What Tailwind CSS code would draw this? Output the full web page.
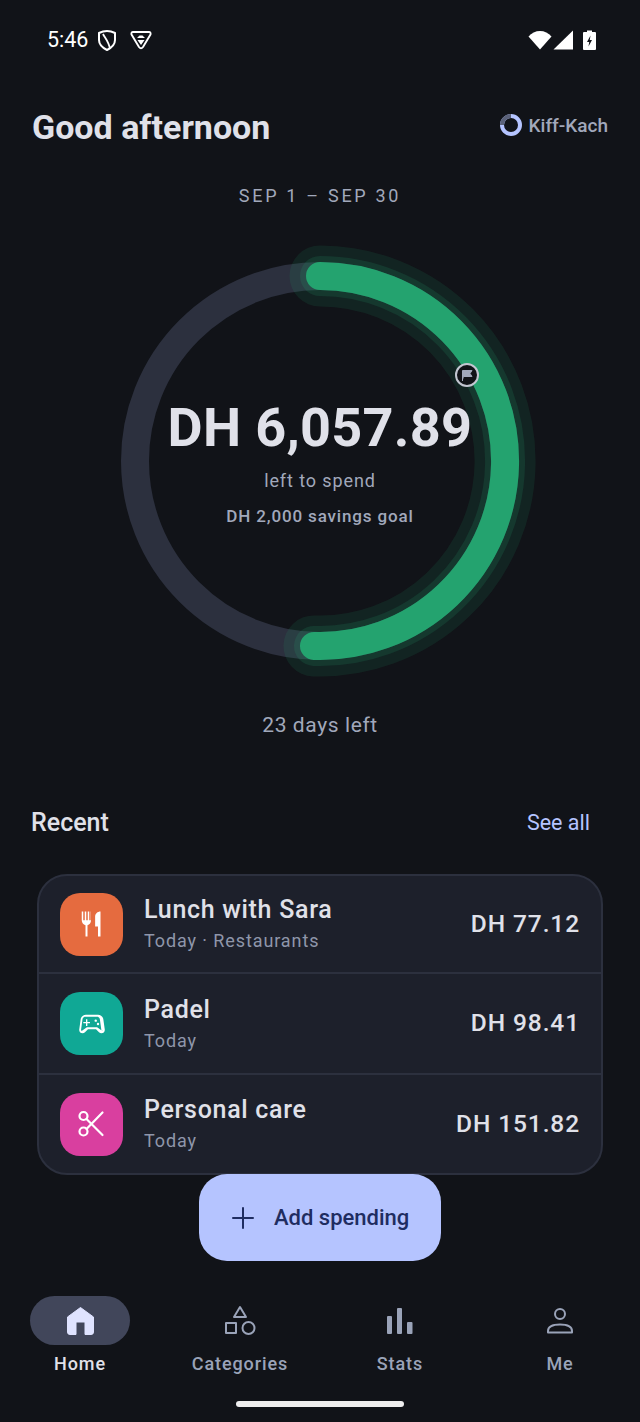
<!DOCTYPE html>
<html><head><meta charset="utf-8"><script src="https://cdn.jsdelivr.net/npm/@tailwindcss/browser@4"></script></head>
<body class="bg-[#111318]">
<div class="w-[640px] h-[1422px] overflow-hidden bg-[#111318] font-['Roboto',sans-serif] flex flex-col">
  <!-- status bar -->
  <div class="h-[80px] shrink-0 flex items-center pl-[47px] pr-[44px] text-white">
    <span class="text-[21.5px] leading-none w-[43px]">5:46</span>
    <svg class="ml-[7px]" width="20" height="22" viewBox="0 0 20 22" fill="none" stroke="#fff" stroke-width="2" stroke-linejoin="round"><path d="M10 2 C7 2 4 3 2 4 L2 11 C2 16 6 19 10 21 C14 19 18 16 18 11 L18 4 C16 3 13 2 10 2Z"/><path d="M6 5 C8 9 12 13 13 20" stroke-width="1.8"/></svg>
    <svg class="ml-[13px]" width="22" height="20" viewBox="0 0 22 20" fill="none"><path d="M3 2 H19 Q21 2 20.5 4.5 L13 17 Q11 19.5 9 17 L1.5 4.5 Q1 2 3 2Z" stroke="#fff" stroke-width="1.9" stroke-linejoin="round"/><path d="M7 8 L9.5 5.5 H12.5 L15 8Z M7.5 10 H14.5 L11 15Z" fill="#fff"/></svg>
    <div class="flex-1"></div>
    <svg width="24" height="20" viewBox="0 0 24 20"><path d="M0.5 6.5 C3.5 3 7.5 1 12 1 C16.5 1 20.5 3 23.5 6.5 L12 19.5Z" fill="#fff"/></svg>
    <svg class="ml-[1px] mr-[1px]" width="20" height="20" viewBox="0 0 20 20"><path d="M20 0.5 V19.5 H0.5Z" fill="#fff"/></svg>
    <svg class="ml-[9px]" width="13" height="20" viewBox="0 0 13 20"><path d="M4 0.5 H9 V2 H12 Q13 2 13 3 V19 Q13 20 12 20 H1 Q0 20 0 19 V3 Q0 2 1 2 H4Z" fill="#fff"/><path d="M7.5 5.5 L4 12 H6.2 L5.5 16.5 L9 10 H6.8Z" fill="#111318"/></svg>
  </div>
  <!-- header -->
  <div class="h-[92px] shrink-0 flex items-center justify-between pl-[32px] pr-[32px]">
    <h1 class="text-[34px] leading-none font-bold text-[#e0e1e9] mt-[2px]">Good afternoon</h1>
    <div class="flex items-center gap-[6px] -mt-[2px]">
      <svg width="24" height="24" viewBox="0 0 24 24" fill="none"><circle cx="12" cy="12" r="9" stroke="#b5c4ff" stroke-width="4"/><path d="M3 12 A9 9 0 0 1 12 3" stroke="#5a6178" stroke-width="4"/></svg>
      <span class="text-[19px] leading-none font-medium text-[#a1a8bb]">Kiff-Kach</span>
    </div>
  </div>
  <div class="text-center text-[18px] leading-[24px] tracking-[2.7px] text-[#a1a8bb] mt-[12px]">SEP 1 – SEP 30</div>
  <!-- ring -->
  <div class="relative w-[440px] h-[440px] mx-auto shrink-0 mt-[33px]">
    <svg class="absolute inset-0" width="440" height="440" viewBox="0 0 440 440" fill="none">
      <circle cx="220" cy="220" r="185" stroke="#2c303e" stroke-width="28"/>
      <path d="M220 35 A185 185 0 1 1 214 404.9" stroke="#24a36f" stroke-opacity=".12" stroke-width="61" stroke-linecap="round"/>
      <path d="M220 35 A185 185 0 1 1 214 404.9" stroke="#24a36f" stroke-opacity=".16" stroke-width="40" stroke-linecap="round"/>
      <path d="M220 35 A185 185 0 1 1 214 404.9" stroke="#24a36f" stroke-width="28" stroke-linecap="round"/>
      <circle cx="367" cy="134" r="11" fill="#111318" stroke="#c3c6d1" stroke-width="2"/>
      <path d="M362.5 140 V129.5 H372 L370 132.5 L372 135.5 H364" fill="#a1a8bb" stroke="#a1a8bb" stroke-width="1" stroke-linejoin="round"/>
    </svg>
    <div class="absolute inset-0 flex flex-col items-center">
      <div class="mt-[156px] text-[54px] leading-[62px] font-bold tracking-[.3px] text-[#e0e1e9]">DH 6,057.89</div>
      <div class="mt-[10px] text-[18px] leading-[24px] tracking-[.9px] text-[#a1a8bb]">left to spend</div>
      <div class="mt-[12px] text-[17px] leading-[22px] font-medium tracking-[.85px] text-[#a1a8bb]">DH 2,000 savings goal</div>
    </div>
  </div>
  <div class="text-center text-[21px] leading-[28px] tracking-[.6px] text-[#a1a8bb] mt-[30px]">23 days left</div>
  <!-- recent -->
  <div class="flex items-center justify-between pl-[31px] pr-[50px] mt-[67px] h-[34px]">
    <span class="text-[25px] font-medium text-[#e0e1e9]">Recent</span>
    <span class="text-[21.5px] font-normal text-[#b5c4ff]">See all</span>
  </div>
  <div class="mx-[37px] mt-[34px] rounded-[30px] border-2 border-[#2c303e] bg-[#1d202b] overflow-hidden shrink-0">
    <div class="h-[98px] flex items-center px-[21px] border-b-2 border-[#2c303e]">
      <div class="w-[63px] h-[63px] rounded-[20px] bg-[#e56b3f] flex items-center justify-center shrink-0">
        <svg width="30" height="30" viewBox="0 0 24 24" fill="#fff"><path d="M11 9H9.8V2H8.6v7H7.4V2H6.2v7H5V2H3.8v7c0 2 1.3 3.6 3 3.9V22h1.6v-9.1c1.7-.3 2.8-1.9 2.8-3.9V2H11zm3.5-3v8h2.3v8h2V2c-2.4 0-4.3 1.8-4.3 4z"/></svg>
      </div>
      <div class="ml-[21px] flex-1">
        <div class="text-[25px] leading-[30px] font-medium tracking-[.7px] text-[#e0e1e9]">Lunch with Sara</div>
        <div class="text-[18px] leading-[24px] tracking-[.9px] text-[#8f96aa] mt-[4px]">Today · Restaurants</div>
      </div>
      <div class="text-[24.5px] font-medium tracking-[.9px] text-[#e0e1e9]">DH 77.12</div>
    </div>
    <div class="h-[101px] flex items-center px-[21px] border-b-2 border-[#2c303e]">
      <div class="w-[63px] h-[63px] rounded-[20px] bg-[#10a895] flex items-center justify-center shrink-0">
        <svg width="32" height="32" viewBox="0 0 24 24" fill="#fff"><path d="M21.58 16.09l-1.09-7.66C20.21 6.46 18.52 5 16.53 5H7.47C5.48 5 3.79 6.46 3.51 8.43l-1.09 7.66C2.2 17.63 3.39 19 4.94 19c.68 0 1.32-.27 1.8-.75L9 16h6l2.25 2.25c.48.48 1.13.75 1.8.75 1.56 0 2.75-1.37 2.53-2.91zm-1.5.72c-.08.09-.21.19-.42.19-.15 0-.29-.06-.39-.16L15.83 14.5H8.17l-3.44 2.34c-.1.1-.24.16-.39.16-.21 0-.34-.1-.42-.19-.08-.09-.16-.23-.13-.44l1.09-8c.14-.98.99-1.87 1.98-1.87h9.06c.99 0 1.84.89 1.98 1.87l1.09 8c.03.2-.05.34-.12.43z"/><path d="M8.5 8.5h-1v2h-2v1h2v2h1v-2h2v-1h-2z"/><circle cx="16.5" cy="12" r=".9"/><circle cx="14.8" cy="9.5" r=".9"/></svg>
      </div>
      <div class="ml-[21px] flex-1">
        <div class="text-[25px] leading-[30px] font-medium tracking-[.7px] text-[#e0e1e9]">Padel</div>
        <div class="text-[18px] leading-[24px] tracking-[.9px] text-[#8f96aa] mt-[4px]">Today</div>
      </div>
      <div class="text-[24.5px] font-medium tracking-[.9px] text-[#e0e1e9]">DH 98.41</div>
    </div>
    <div class="h-[98px] flex items-center px-[21px]">
      <div class="w-[63px] h-[63px] rounded-[20px] bg-[#d93f9f] shrink-0">
        <svg width="63" height="63" viewBox="0 0 63 63" fill="none" stroke="#fff" stroke-width="2.2" stroke-linecap="round"><circle cx="23.5" cy="23" r="4"/><circle cx="23.5" cy="38.5" r="4"/><path d="M26.5 26 L42.5 42 M26.5 36 L42.5 19.5"/></svg>
      </div>
      <div class="ml-[21px] flex-1">
        <div class="text-[25px] leading-[30px] font-medium tracking-[.7px] text-[#e0e1e9]">Personal care</div>
        <div class="text-[18px] leading-[24px] tracking-[.9px] text-[#8f96aa] mt-[4px]">Today</div>
      </div>
      <div class="text-[24.5px] font-medium tracking-[.9px] text-[#e0e1e9]">DH 151.82</div>
    </div>
  </div>
  <!-- fab -->
  <div class="relative self-center w-[242px] h-[87px] -mt-[1px] shrink-0 rounded-[28px] bg-[#b5c4ff] flex items-center pl-[32px] text-[#1f2d61]">
    <svg width="24" height="24" viewBox="0 0 24 24" fill="none" stroke="#1f2d61" stroke-width="2" stroke-linecap="round"><path d="M12 2 V22 M2 12 H22"/></svg>
    <span class="ml-[19px] text-[22px] leading-none font-medium">Add spending</span>
  </div>
  <!-- nav -->
  <div class="grid grid-cols-4 mt-[35px] shrink-0">
    <div class="flex flex-col items-center">
      <div class="w-[100px] h-[49px] rounded-full bg-[#41465a] flex items-center justify-center">
        <svg width="27" height="28" viewBox="0 0 27 28" fill="#dfe3ff"><path d="M13.5 0.5 L26.5 10 V25 Q26.5 27.5 24 27.5 H18 V15 H9 V27.5 H3 Q0.5 27.5 0.5 25 V10Z" stroke="#dfe3ff" stroke-linejoin="round"/></svg>
      </div>
      <span class="mt-[6px] text-[18px] leading-[26px] font-medium tracking-[.9px] text-[#e0e1e9]">Home</span>
    </div>
    <div class="flex flex-col items-center">
      <div class="h-[49px] flex items-center justify-center">
        <svg width="32" height="32" viewBox="0 0 32 32" fill="none" stroke="#9aa3b8" stroke-width="2" stroke-linejoin="round"><path d="M16 2 L22 12 H10Z"/><rect x="2" y="18" width="10" height="10"/><circle cx="24.5" cy="23" r="6"/></svg>
      </div>
      <span class="mt-[6px] text-[18px] leading-[26px] font-medium tracking-[.9px] text-[#9aa3b8]">Categories</span>
    </div>
    <div class="flex flex-col items-center">
      <div class="h-[49px] flex items-center justify-center">
        <svg width="26" height="26" viewBox="0 0 26 26" fill="#9aa3b8"><rect x="0" y="8" width="5" height="18" rx="1"/><rect x="10" y="0" width="5" height="26" rx="1"/><rect x="20" y="14" width="5.5" height="12" rx="1"/></svg>
      </div>
      <span class="mt-[6px] text-[18px] leading-[26px] font-medium tracking-[.9px] text-[#9aa3b8]">Stats</span>
    </div>
    <div class="flex flex-col items-center">
      <div class="h-[49px] flex items-center justify-center">
        <svg width="26" height="26" viewBox="0 0 26 26" fill="none" stroke="#9aa3b8" stroke-width="2"><circle cx="13" cy="6" r="5"/><path d="M1 23 C1 18 7 16.5 13 16.5 C19 16.5 25 18 25 23 V24.5 H1Z" stroke-linejoin="round"/></svg>
      </div>
      <span class="mt-[6px] text-[18px] leading-[26px] font-medium tracking-[.9px] text-[#9aa3b8]">Me</span>
    </div>
  </div>
  <div class="w-[168px] h-[6px] rounded-full bg-[#eeeeee] self-center mt-[24px] shrink-0"></div>
</div>
</body></html>
